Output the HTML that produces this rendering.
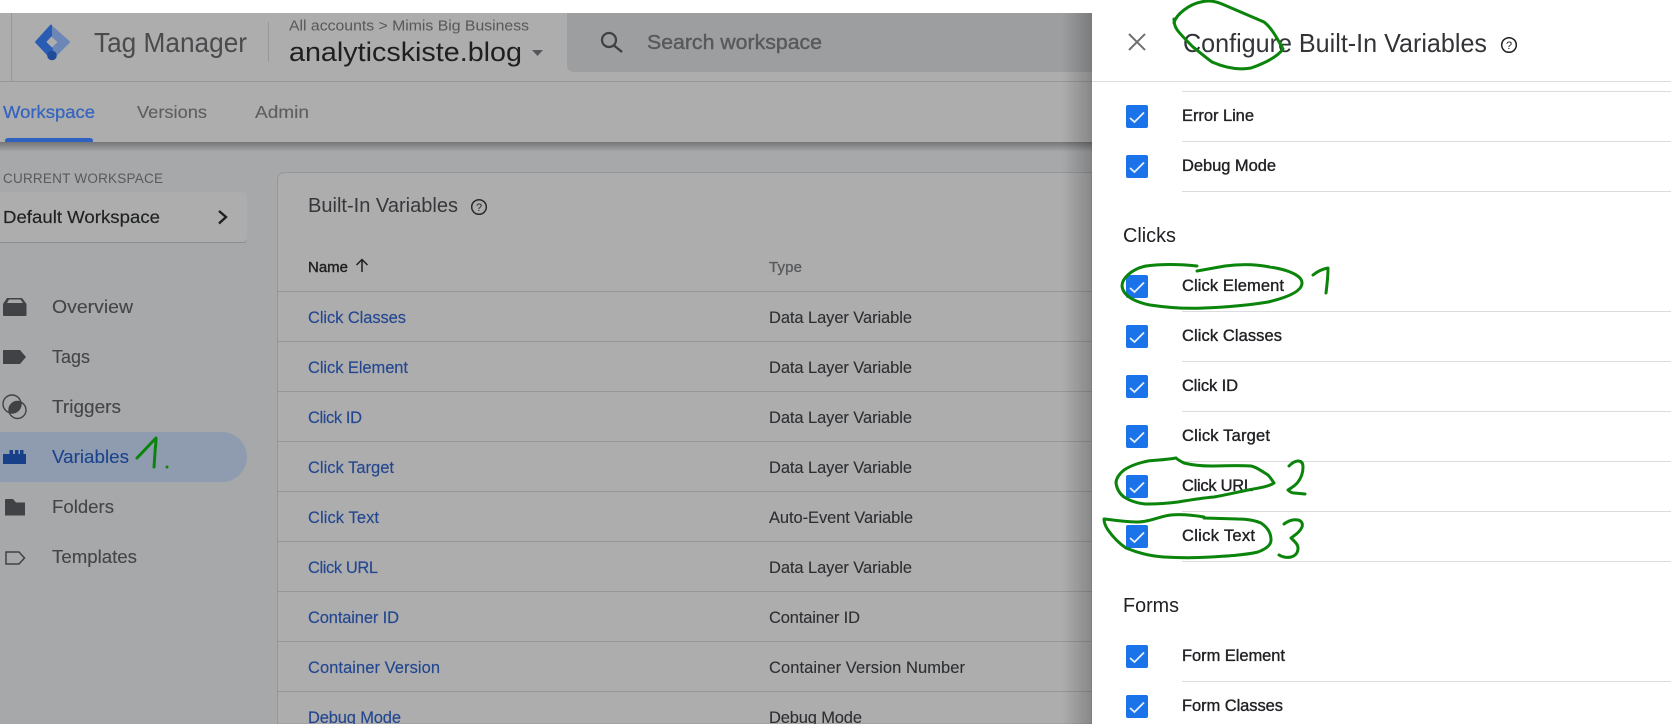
<!DOCTYPE html>
<html lang="en"><head><meta charset="utf-8"><title>Configure Built-In Variables</title>
<style>
html,body{margin:0;padding:0;width:1671px;height:724px;overflow:hidden;background:#fff}
svg{display:block}
text{font-family:"Liberation Sans",Arial,sans-serif;white-space:pre}
.row{font-size:16.5px;fill:#234791;stroke:#234791;stroke-width:.15}
.ty{font-size:16.5px;fill:#2c2e31;stroke:#2c2e31;stroke-width:.1}
.nav{font-size:18px;fill:#444547;stroke:#444547;stroke-width:.12}
.it{font-size:16.5px;fill:#202124;stroke:#202124;stroke-width:.35}
.h{font-size:20.5px;fill:#202124}
.g{fill:none;stroke:#0a840a;stroke-width:3;stroke-linecap:round;stroke-linejoin:round}
.ln{stroke:#969798;stroke-width:1}
.pl{stroke:#dadce0;stroke-width:1}
.ic{fill:#404245}
</style></head><body>
<svg xmlns="http://www.w3.org/2000/svg" width="1671" height="724" viewBox="0 0 1671 724">
<defs>
<linearGradient id="ps" x1="0" x2="1" y1="0" y2="0"><stop offset="0" stop-color="#000" stop-opacity="0"/><stop offset="1" stop-color="#000" stop-opacity=".22"/></linearGradient>
<linearGradient id="ts" x1="0" x2="0" y1="0" y2="1"><stop offset="0" stop-color="#000" stop-opacity=".3"/><stop offset="1" stop-color="#000" stop-opacity="0"/></linearGradient>
<clipPath id="tc"><circle cx="12" cy="404" r="9"/></clipPath>
<g id="cb"><rect width="22" height="23" rx="2" fill="#1a73e8"/><path d="M4 13 L8.500 17 L18 7.500" fill="none" stroke="#e8f0fe" stroke-width="1.800"/></g>
</defs>

<!-- page background -->
<rect x="0" y="13" width="1092" height="711" fill="#a6a8aa"/>
<!-- header -->
<rect x="0" y="13" width="1092" height="129" fill="#adadad"/>
<line x1="0" x2="1092" y1="81.5" y2="81.5" class="ln"/>
<line x1="11.5" x2="11.5" y1="13" y2="81" class="ln"/>
<line x1="268.5" x2="268.5" y1="22" y2="62" class="ln"/>

<!-- logo -->
<path d="M51 26 L69 42 L52 59 L52 49 L59 42 L51 35Z" fill="#6c86b6" stroke="#6c86b6" stroke-width="2" stroke-linejoin="round"/>
<path d="M51 25.500 L36 42 L52 59 L52 49 L45 42 L51 35.500Z" fill="#2a5cb3" stroke="#2a5cb3" stroke-width="2" stroke-linejoin="round"/>
<circle cx="52" cy="55.500" r="4.800" fill="#1f4b98"/>
<text x="94" y="52" font-size="28" fill="#4a4b4d" textLength="153" lengthAdjust="spacingAndGlyphs">Tag Manager</text>
<text x="289" y="30.5" font-size="15" fill="#56585a" textLength="240" lengthAdjust="spacingAndGlyphs">All accounts &gt; Mimis Big Business</text>
<text x="289" y="61" font-size="27" fill="#1e1f20" textLength="233" lengthAdjust="spacingAndGlyphs">analyticskiste.blog</text>
<path d="M532 50 H543 L537.5 56Z" fill="#55575a"/>

<!-- search -->
<path d="M567 13 H1092 V72 H575 Q567 72 567 64Z" fill="#9d9e9f"/>
<circle cx="609" cy="40" r="7" fill="none" stroke="#3e4043" stroke-width="2.2"/>
<line x1="614" y1="45.5" x2="622" y2="52" stroke="#3e4043" stroke-width="2.4"/>
<text x="647" y="49" font-size="20" fill="#58595b" stroke="#58595b" stroke-width=".4" textLength="175" lengthAdjust="spacingAndGlyphs">Search workspace</text>

<!-- tabs -->
<text x="3" y="118" font-size="17.5" fill="#3765bf" stroke="#3765bf" stroke-width=".3" textLength="92" lengthAdjust="spacingAndGlyphs">Workspace</text>
<text x="137" y="118" font-size="17.5" fill="#5d5e60" stroke="#5d5e60" stroke-width=".12" textLength="70" lengthAdjust="spacingAndGlyphs">Versions</text>
<text x="255" y="118" font-size="17.5" fill="#5d5e60" stroke="#5d5e60" stroke-width=".12" textLength="54" lengthAdjust="spacingAndGlyphs">Admin</text>
<path d="M5 142 V141 Q5 138 8 138 H90 Q93 138 93 141 V142Z" fill="#2f62c0"/>
<rect x="0" y="142" width="1092" height="10" fill="url(#ts)"/>

<!-- sidebar -->
<text x="3" y="183" font-size="13.5" fill="#58595b" textLength="160" lengthAdjust="spacing">CURRENT WORKSPACE</text>
<rect x="-8" y="193" width="255" height="50" rx="4" fill="#8c8d8f"/>
<rect x="-8" y="192" width="255" height="50" rx="4" fill="#adadad"/>
<text x="3" y="223" font-size="17.5" fill="#1f2021" stroke="#1f2021" stroke-width=".15" textLength="157" lengthAdjust="spacingAndGlyphs">Default Workspace</text>
<path d="M219 211 L226 217 L219 223.5" fill="none" stroke="#1f2021" stroke-width="2.4"/>

<path d="M0 432 H222 A25 25 0 0 1 222 482 H0Z" fill="#8f9cb0"/>
<path class="ic" d="M3 304 L7 298 H22 L26.500 304 V315 Q26.500 316 25.500 316 H4 Q3 316 3 315Z"/>
<path d="M7 303 L9 299.500 H20.500 L23 303Z" fill="#a6a8aa"/>
<path class="ic" d="M3 350 H20 L26 357 L20 364 H3Z"/>
<circle cx="12" cy="404" r="9" fill="none" stroke="#404245" stroke-width="1.4"/>
<circle cx="17.500" cy="410" r="8.500" fill="none" stroke="#404245" stroke-width="1.4"/>
<circle cx="17.500" cy="410" r="8.500" fill="#404245" clip-path="url(#tc)"/>
<path d="M3 454 H9.500 V450 H13 V454 H15 V450 H18.500 V454 H20 V450 H23.500 V454 H26 V464 H3Z" fill="#173f8a"/>
<path class="ic" d="M5 500 Q5 499 6 499 H13 L16 502.500 H25 V515.500 H5Z"/>
<path d="M6 552 H19 L24.500 558 L19 564 H6Z" fill="none" stroke="#404245" stroke-width="1.500"/>

<text class="nav" x="52" y="313" textLength="81" lengthAdjust="spacingAndGlyphs">Overview</text>
<text class="nav" x="52" y="363" textLength="38" lengthAdjust="spacingAndGlyphs">Tags</text>
<text class="nav" x="52" y="413" textLength="69" lengthAdjust="spacingAndGlyphs">Triggers</text>
<text class="nav" x="52" y="463" textLength="77" lengthAdjust="spacingAndGlyphs" style="fill:#1c448e;stroke:#1c448e">Variables</text>
<text class="nav" x="52" y="513" textLength="62" lengthAdjust="spacingAndGlyphs">Folders</text>
<text class="nav" x="52" y="563" textLength="85" lengthAdjust="spacingAndGlyphs">Templates</text>

<!-- card -->
<path d="M277.500 724 V180 Q277.500 172.500 285 172.500 H1092 V724Z" fill="#adadad" stroke="#979798"/>
<text x="308" y="212" font-size="20" fill="#36373a" textLength="150" lengthAdjust="spacingAndGlyphs">Built-In Variables</text>
<circle cx="479" cy="207" r="7.300" fill="none" stroke="#2a2b2d" stroke-width="1.500"/>
<text x="479" y="211" font-size="11" fill="#2a2b2d" text-anchor="middle">?</text>

<text x="308" y="272" font-size="15" fill="#1f2021" stroke="#1f2021" stroke-width=".4" textLength="40" lengthAdjust="spacingAndGlyphs">Name</text>
<path d="M362 272 V260 M356.500 265 L362 259.500 L367.500 265" fill="none" stroke="#1f2021" stroke-width="1.500"/>
<text x="769" y="272" font-size="15" fill="#58595b" stroke="#58595b" stroke-width=".3" textLength="33" lengthAdjust="spacing">Type</text>

<line class="ln" x1="278" x2="1092" y1="291.500" y2="291.500"/>
<line class="ln" x1="278" x2="1092" y1="341.500" y2="341.500"/>
<line class="ln" x1="278" x2="1092" y1="391.500" y2="391.500"/>
<line class="ln" x1="278" x2="1092" y1="441.500" y2="441.500"/>
<line class="ln" x1="278" x2="1092" y1="491.500" y2="491.500"/>
<line class="ln" x1="278" x2="1092" y1="541.500" y2="541.500"/>
<line class="ln" x1="278" x2="1092" y1="591.500" y2="591.500"/>
<line class="ln" x1="278" x2="1092" y1="641.500" y2="641.500"/>
<line class="ln" x1="278" x2="1092" y1="691.500" y2="691.500"/>

<text class="row" x="308" y="323" textLength="98" lengthAdjust="spacing">Click Classes</text>
<text class="ty" x="769" y="323" textLength="143" lengthAdjust="spacing">Data Layer Variable</text>
<text class="row" x="308" y="373" textLength="100" lengthAdjust="spacing">Click Element</text>
<text class="ty" x="769" y="373" textLength="143" lengthAdjust="spacing">Data Layer Variable</text>
<text class="row" x="308" y="423" textLength="54" lengthAdjust="spacing">Click ID</text>
<text class="ty" x="769" y="423" textLength="143" lengthAdjust="spacing">Data Layer Variable</text>
<text class="row" x="308" y="473" textLength="86" lengthAdjust="spacing">Click Target</text>
<text class="ty" x="769" y="473" textLength="143" lengthAdjust="spacing">Data Layer Variable</text>
<text class="row" x="308" y="523" textLength="71" lengthAdjust="spacing">Click Text</text>
<text class="ty" x="769" y="523" textLength="144" lengthAdjust="spacing">Auto-Event Variable</text>
<text class="row" x="308" y="573" textLength="70" lengthAdjust="spacing">Click URL</text>
<text class="ty" x="769" y="573" textLength="143" lengthAdjust="spacing">Data Layer Variable</text>
<text class="row" x="308" y="623" textLength="91" lengthAdjust="spacing">Container ID</text>
<text class="ty" x="769" y="623" textLength="91" lengthAdjust="spacing">Container ID</text>
<text class="row" x="308" y="673" textLength="132" lengthAdjust="spacing">Container Version</text>
<text class="ty" x="769" y="673" textLength="196" lengthAdjust="spacing">Container Version Number</text>
<text class="row" x="308" y="723" textLength="93" lengthAdjust="spacing">Debug Mode</text>
<text class="ty" x="769" y="723" textLength="93" lengthAdjust="spacing">Debug Mode</text>

<!-- panel shadow -->
<rect x="1062" y="13" width="30" height="711" fill="url(#ps)"/>

<!-- panel -->
<rect x="1092" y="0" width="579" height="724" fill="#fff"/>
<line class="pl" x1="1092" x2="1671" y1="81.500" y2="81.500"/>
<path d="M1129 34 L1145 50 M1145 34 L1129 50" stroke="#6f7072" stroke-width="2" fill="none"/>
<text x="1183" y="52" font-size="26" fill="#333437" textLength="304" lengthAdjust="spacingAndGlyphs">Configure Built-In Variables</text>
<circle cx="1509" cy="45" r="7.300" fill="none" stroke="#202124" stroke-width="1.500"/>
<text x="1509" y="49" font-size="11" fill="#202124" text-anchor="middle">?</text>

<line class="pl" x1="1182" x2="1671" y1="91.500" y2="91.500"/>
<line class="pl" x1="1182" x2="1671" y1="141.500" y2="141.500"/>
<line class="pl" x1="1182" x2="1671" y1="191.500" y2="191.500"/>
<line class="pl" x1="1182" x2="1671" y1="311.500" y2="311.500"/>
<line class="pl" x1="1182" x2="1671" y1="361.500" y2="361.500"/>
<line class="pl" x1="1182" x2="1671" y1="411.500" y2="411.500"/>
<line class="pl" x1="1182" x2="1671" y1="461.500" y2="461.500"/>
<line class="pl" x1="1182" x2="1671" y1="511.500" y2="511.500"/>
<line class="pl" x1="1182" x2="1671" y1="561.500" y2="561.500"/>
<line class="pl" x1="1182" x2="1671" y1="681.500" y2="681.500"/>

<use href="#cb" x="1126" y="105"/><text class="it" x="1182" y="121" textLength="72" lengthAdjust="spacing">Error Line</text>
<use href="#cb" x="1126" y="155"/><text class="it" x="1182" y="171" textLength="94" lengthAdjust="spacing">Debug Mode</text>
<text class="h" x="1123" y="242" textLength="53" lengthAdjust="spacingAndGlyphs">Clicks</text>
<use href="#cb" x="1126" y="275"/><text class="it" x="1182" y="291" textLength="102" lengthAdjust="spacing">Click Element</text>
<use href="#cb" x="1126" y="325"/><text class="it" x="1182" y="341" textLength="100" lengthAdjust="spacing">Click Classes</text>
<use href="#cb" x="1126" y="375"/><text class="it" x="1182" y="391" textLength="56" lengthAdjust="spacing">Click ID</text>
<use href="#cb" x="1126" y="425"/><text class="it" x="1182" y="441" textLength="88" lengthAdjust="spacing">Click Target</text>
<use href="#cb" x="1126" y="475"/><text class="it" x="1182" y="491" textLength="71" lengthAdjust="spacing">Click URL</text>
<use href="#cb" x="1126" y="525"/><text class="it" x="1182" y="541" textLength="73" lengthAdjust="spacing">Click Text</text>
<text class="h" x="1123" y="612" textLength="56" lengthAdjust="spacingAndGlyphs">Forms</text>
<use href="#cb" x="1126" y="645"/><text class="it" x="1182" y="661" textLength="103" lengthAdjust="spacing">Form Element</text>
<use href="#cb" x="1126" y="695"/><text class="it" x="1182" y="711" textLength="101" lengthAdjust="spacing">Form Classes</text>

<!-- green annotations -->
<path class="g" d="M1174 23 C1176 14 1190 4 1201 2 C1208 0 1215 1 1222 4 L1236 10 L1264 22 C1272 28 1278 40 1283 49 C1278 56 1268 62 1251 68 C1240 70 1228 69 1212 62 C1205 57 1197 50 1193 47 C1188 42 1182 36 1178 31 C1175 27 1174 24 1174 19"/>
<path class="g" d="M1197 266 C1180 264 1160 264 1146 266 C1132 269 1122 278 1122 286 C1123 296 1135 302 1150 305 C1170 308 1185 309 1204 308 C1230 307 1250 305 1268 302 C1285 298 1302 292 1302 283 C1302 276 1290 270 1270 267 C1255 264 1240 264 1225 266 L1197 271"/>
<path class="g" d="M1313 275 C1318 271 1322 269 1328 268 C1328 276 1327 285 1326 293"/>
<path class="g" d="M1176 458 C1165 460 1156 460 1148 461 C1138 463 1130 466 1124 470 C1118 475 1116 479 1116 483 C1117 490 1120 494 1124 497 C1132 502 1140 504 1148 504 C1160 504 1170 503 1178 502 C1190 500 1202 498 1214 497 C1226 495 1238 492 1248 490 C1258 488 1268 487 1274 483 C1272 480 1270 477 1268 475 C1262 471 1256 467 1251 466 C1238 465 1224 466 1211 466 C1202 466 1192 465 1184 463 C1180 461 1178 460 1176 458"/>
<path class="g" d="M1289 466 C1292 463 1295 461 1298 461 C1302 461 1303 464 1303 467 C1303 473 1301 478 1298 482 C1295 486 1291 488 1288 490 C1290 492 1292 493 1294 493 L1305 494"/>
<path class="g" d="M1204 517 C1192 515 1182 514 1171 515 C1160 516 1150 522 1138 522 C1126 522 1114 520 1104 519 C1104 523 1106 527 1108 530 C1113 537 1120 544 1126 548 C1138 553 1150 556 1164 557 C1180 558 1195 558 1211 557 C1228 556 1245 555 1258 552 C1266 549 1271 545 1271 540 C1271 533 1267 527 1261 523 C1254 520 1246 519 1238 519 L1204 518"/>
<path class="g" d="M1284 524 C1288 521 1293 519 1298 520 C1302 521 1303 524 1302 527 C1300 532 1295 535 1291 538 C1294 541 1298 544 1298 548 C1298 553 1295 556 1291 557 C1287 558 1282 557 1279 555"/>
<path class="g" d="M137 458 C143 452 150 444 156 438 C156 445 155 449 155 453 L154 467"/>
<circle cx="167" cy="467" r="1.500" fill="#0a840a"/>
</svg>
</body></html>
